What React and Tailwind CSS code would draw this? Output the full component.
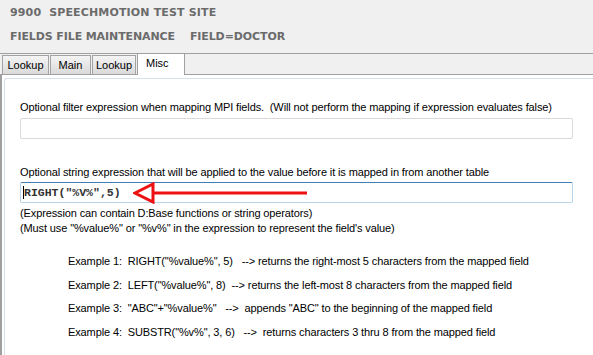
import React from "react";

const Tab = ({ label, w }) => (
  <div
    className={`h-[19px] mt-[2px] border border-[#a3a3a3] border-b-0 bg-gradient-to-b from-[#f4f4f4] to-[#dadada] flex items-center justify-center text-[11px] text-black ${w}`}
  >
    {label}
  </div>
);

export default function App() {
  return (
    <div
      className="w-[593px] h-[355px] bg-[#f0f0f0] overflow-hidden flex flex-col text-black"
      style={{ fontFamily: '"Liberation Sans", Arial, sans-serif' }}
    >
      <div
        className="px-[10px] pt-[6px] h-[53px] flex flex-col gap-[11px] font-bold text-[11px] text-[#6b6b6b]"
        style={{ fontFamily: '"DejaVu Sans", Verdana, sans-serif' }}
      >
        <div className="leading-[13px] tracking-[0.15px]">9900&nbsp;&nbsp;SPEECHMOTION TEST SITE</div>
        <div className="leading-[13px] tracking-[-0.1px]">FIELDS FILE MAINTENANCE&nbsp;&nbsp;&nbsp;&nbsp;FIELD=DOCTOR</div>
      </div>
      <div className="relative h-[22px] border-t border-b border-[#a0a0a0] bg-[#f0f0f0] flex items-end gap-[1px] pl-[2px]">
        <Tab label="Lookup" w="w-[47px]" />
        <Tab label="Main" w="w-[41px]" />
        <Tab label="Lookup" w="w-[44px]" />
        <div className="absolute left-[137px] top-[-1px] w-[48px] h-[22px] bg-white border border-[#a0a0a0] border-b-0 text-[11px] pl-[8px] pt-[1px]">
          Misc
        </div>
      </div>
      <div className="flex-1 bg-white border-l-[2px] border-[#a0a0a0] pl-[2px] pt-[3px]">
        <div className="h-full border-l border-t border-[#d6e1ec] rounded-tl-[3px] pl-[15px] relative text-[11px] tracking-[-0.12px]">
          <div className="pt-[22px] leading-[13px]">
            Optional filter expression when mapping MPI fields.&nbsp;&nbsp;(Will not perform the mapping if expression evaluates false)
          </div>
          <div className="mt-[4px] w-[553px] h-[21px] border border-[#d9d9d9] rounded-[2px]" />
          <div className="mt-[27px] leading-[13px]">
            Optional string expression that will be applied to the value before it is mapped in from another table
          </div>
          <div className="mt-[3px] w-[553px] h-[21px] border border-[#b8d4ea] border-t-[#3f7fb5] rounded-[2px] relative flex items-center pl-[2px]">
            <span className="w-px h-[13px] bg-black" />
            <span
              className="font-bold text-[11.5px] text-[#333] tracking-normal"
              style={{ fontFamily: '"Liberation Mono", "Courier New", monospace' }}
            >
              RIGHT("%V%",5)
            </span>
            <svg className="absolute left-[112px] top-[-1px]" width="176" height="22" viewBox="0 0 176 22">
              <line x1="20" y1="11" x2="174" y2="11" stroke="#ee1111" strokeWidth="3" />
              <polygon points="2,11 20,2 20,20" fill="white" stroke="#ee1111" strokeWidth="3" strokeLinejoin="miter" />
            </svg>
          </div>
          <div className="mt-[3px] leading-[15px]">
            (Expression can contain D:Base functions or string operators)
          </div>
          <div className="leading-[15px]">
            (Must use "%value%" or "%v%" in the expression to represent the field's value)
          </div>
          <div className="pl-[48px] mt-[19px] flex flex-col gap-[10.5px] leading-[13px]">
            <div>Example 1:&nbsp;&nbsp;RIGHT("%value%", 5)&nbsp;&nbsp;&nbsp;--&gt; returns the right-most 5 characters from the mapped field</div>
            <div>Example 2:&nbsp;&nbsp;LEFT("%value%", 8)&nbsp;&nbsp;--&gt; returns the left-most 8 characters from the mapped field</div>
            <div>Example 3:&nbsp;&nbsp;"ABC"+"%value%"&nbsp;&nbsp;&nbsp;--&gt;&nbsp;&nbsp;appends "ABC" to the beginning of the mapped field</div>
            <div>Example 4:&nbsp;&nbsp;SUBSTR("%v%", 3, 6)&nbsp;&nbsp;&nbsp;--&gt;&nbsp;&nbsp;returns characters 3 thru 8 from the mapped field</div>
          </div>
        </div>
      </div>
    </div>
  );
}
